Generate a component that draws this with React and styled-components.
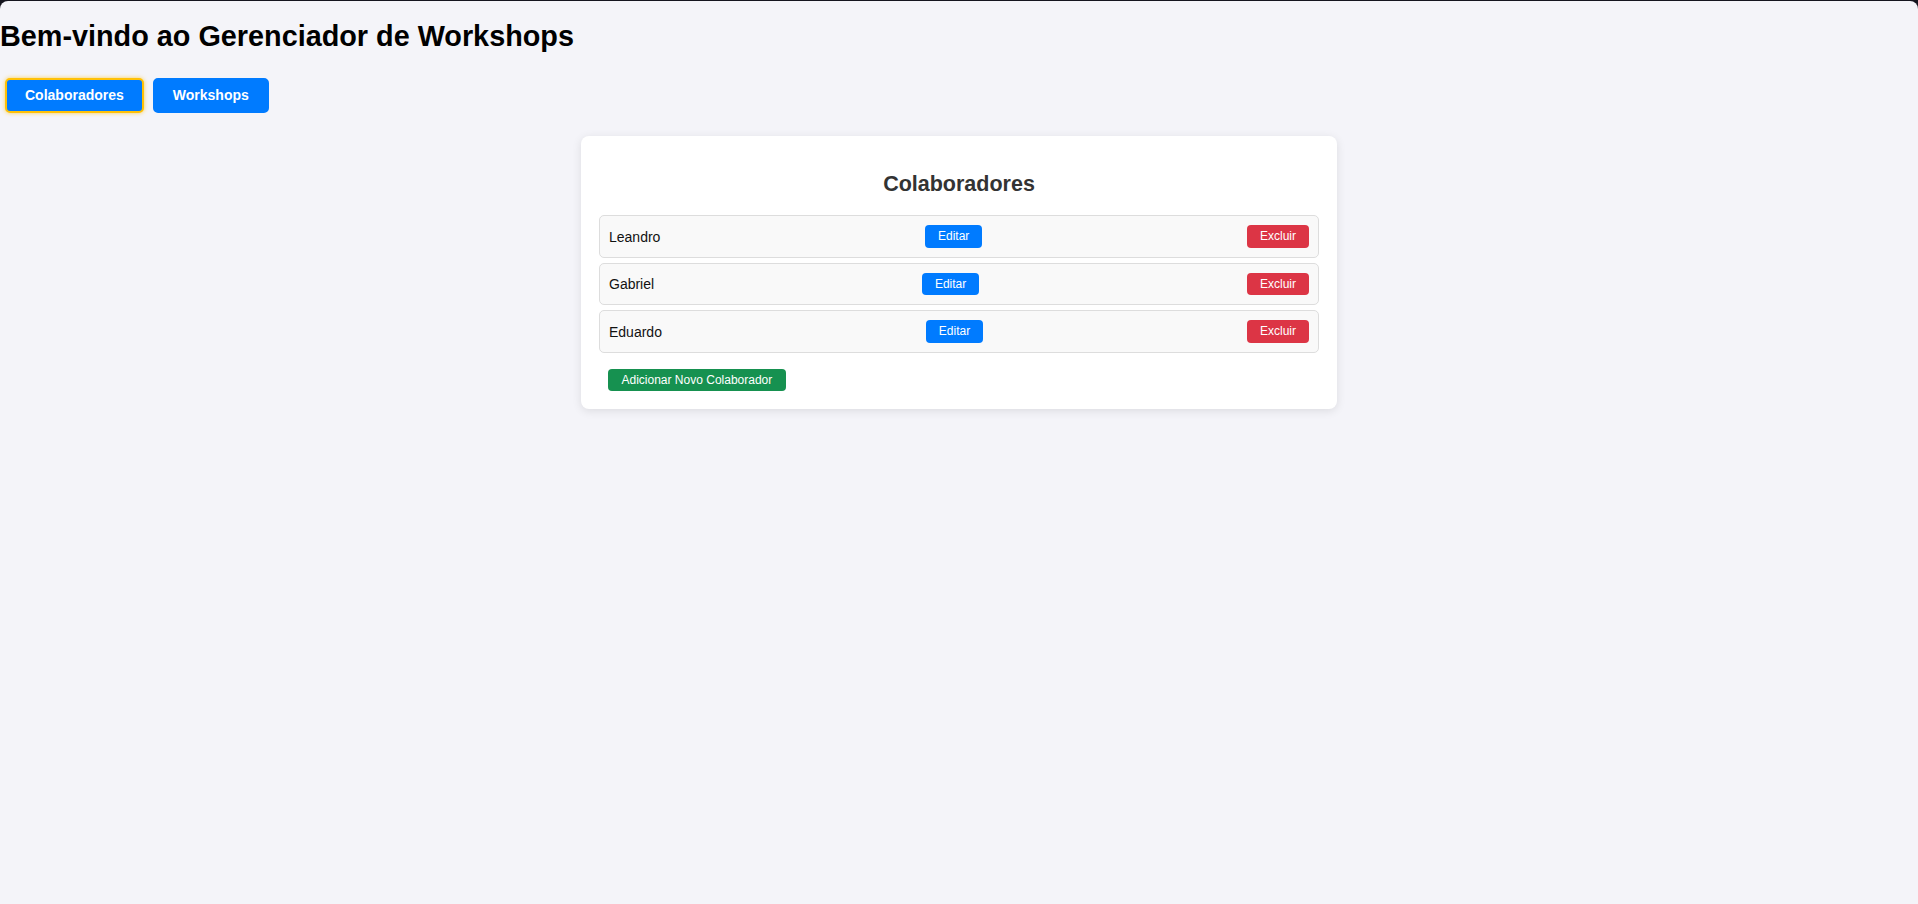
import React, { useState } from "react";
import styled, { createGlobalStyle } from "styled-components";

const GlobalStyle = createGlobalStyle`
  html, body {
    margin: 0;
    padding: 0;
    background: #15151f;
  }
  body {
    font-family: "Liberation Sans", Arial, sans-serif;
  }
`;

const Page = styled.div`
  display: flow-root;
  margin-top: 1px;
  min-height: calc(100vh - 1px);
  background: #f4f4f9;
  border-radius: 8px 8px 0 0;
`;

const Title = styled.h1`
  font-size: 28.8px;
  font-weight: bold;
  color: #000;
  margin: 19.3px 0;
  line-height: 33px;
`;

const Nav = styled.div`
  display: flex;
  gap: 9px;
  padding: 5px;
`;

const TabButton = styled.button`
  font-family: inherit;
  font-size: 14px;
  font-weight: bold;
  line-height: 15.5px;
  color: #fff;
  background: #007bff;
  border: 2px solid ${(p) => (p.$active ? "#ffc107" : "#007bff")};
  box-shadow: ${(p) => (p.$active ? "0 0 4px rgba(255, 193, 7, 0.7)" : "none")};
  border-radius: 5px;
  padding: 8px 18px;
  cursor: pointer;
`;

const Card = styled.div`
  width: 720px;
  margin: 18px auto 0;
  padding: 18px;
  background: #fff;
  border-radius: 8px;
  box-shadow: 0 2px 10px rgba(0, 0, 0, 0.1);
`;

const CardTitle = styled.h2`
  font-size: 21.5px;
  font-weight: bold;
  color: #333;
  text-align: center;
  line-height: 25px;
  margin: 18px 0 18px;
`;

const List = styled.div`
  display: flex;
  flex-direction: column;
  gap: 5px;
`;

const Row = styled.div`
  display: flex;
  justify-content: space-between;
  align-items: center;
  padding: 9px;
  background: #f9f9f9;
  border: 1px solid #ddd;
  border-radius: 5px;
`;

const Name = styled.span`
  font-size: 14px;
  color: #111;
  padding-top: 1px;
`;

const SmallButton = styled.button`
  font-family: inherit;
  font-size: 12px;
  line-height: 14.5px;
  color: #fff;
  background: ${(p) => p.$color};
  border: none;
  border-radius: 4px;
  padding: 4px 13px;
  cursor: pointer;
`;

const AddButton = styled(SmallButton)`
  margin: 16px 0 0 9px;
  padding: 4px 13.5px;
`;

const colaboradores = ["Leandro", "Gabriel", "Eduardo"];

const App = () => {
  const [tab, setTab] = useState("colaboradores");

  return (
    <Page>
      <GlobalStyle />
      <Title>Bem-vindo ao Gerenciador de Workshops</Title>
      <Nav>
        <TabButton
          $active={tab === "colaboradores"}
          onClick={() => setTab("colaboradores")}
        >
          Colaboradores
        </TabButton>
        <TabButton
          $active={tab === "workshops"}
          onClick={() => setTab("workshops")}
        >
          Workshops
        </TabButton>
      </Nav>
      <Card>
        <CardTitle>Colaboradores</CardTitle>
        <List>
          {colaboradores.map((nome) => (
            <Row key={nome}>
              <Name>{nome}</Name>
              <SmallButton $color="#007bff">Editar</SmallButton>
              <SmallButton $color="#dc3545">Excluir</SmallButton>
            </Row>
          ))}
        </List>
        <AddButton $color="#169150">Adicionar Novo Colaborador</AddButton>
      </Card>
    </Page>
  );
};

export default App;
